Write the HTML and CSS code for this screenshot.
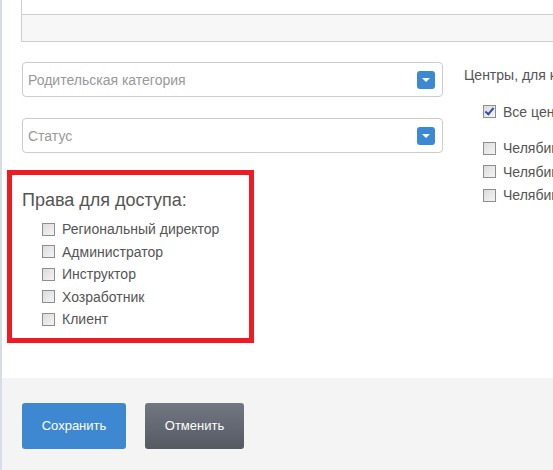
FILE: index.html
```html
<!DOCTYPE html>
<html lang="ru">
<head>
    <meta charset="UTF-8">
    <title>Категория</title>
    <link rel="stylesheet" href="styles.css">
</head>
<body>
    <div class="page">
        <div class="content">
            <div class="panel">
                <div class="panel-body"></div>
                <div class="panel-foot"></div>
            </div>

            <div class="form-row">
                <div class="col-left">
                    <div class="select">
                        <span class="select-text">Родительская категория</span>
                        <span class="select-btn"></span>
                    </div>
                    <div class="select">
                        <span class="select-text">Статус</span>
                        <span class="select-btn"></span>
                    </div>

                    <!-- выделено красной рамкой -->
                    <div class="access">
                        <div class="access-title">Права для доступа:</div>
                        <div class="access-list">
                            <div class="check-row"><span class="box"></span><span>Региональный директор</span></div>
                            <div class="check-row"><span class="box"></span><span>Администратор</span></div>
                            <div class="check-row"><span class="box"></span><span>Инструктор</span></div>
                            <div class="check-row"><span class="box"></span><span>Хозработник</span></div>
                            <div class="check-row"><span class="box"></span><span>Клиент</span></div>
                        </div>
                    </div>
                </div>
                <div class="col-right">
                    <div class="right-title">Центры, для которых доступна категория</div>
                    <div class="check-row all">
                        <span class="box checked"></span>
                        <span>Все центры</span>
                    </div>
                    <div class="centers">
                        <div class="check-row"><span class="box"></span><span>Челябинск, ул. Ленина</span></div>
                        <div class="check-row"><span class="box"></span><span>Челябинск, ул. Кирова</span></div>
                        <div class="check-row"><span class="box"></span><span>Челябинск, пр. Победы</span></div>
                    </div>
                </div>
            </div>
        </div>

        <div class="footer">
            <button class="btn btn-save">Сохранить</button>
            <button class="btn btn-cancel">Отменить</button>
        </div>
    </div>
</body>
</html>
```

FILE: styles.css
```css
html, body {
    margin: 0;
    height: 100%;
    overflow: hidden;
}
body {
    font-family: "Liberation Sans", Arial, sans-serif;
    font-size: 14px;
    color: #555;
    background: #fff;
}
.page {
    min-height: 100%;
    border-left: 2px solid #d8dce4;
    display: flex;
    flex-direction: column;
}
.content {
    padding-left: 19px;
}
.panel {
    border-left: 1px solid #cfcfcf;
    border-bottom: 1px solid #cfcfcf;
}
.panel-body {
    height: 14px;
    background: #fff;
    border-bottom: 1px solid #cfcfcf;
}
.panel-foot {
    height: 26px;
    background: #f7f7f7;
}
.form-row {
    display: flex;
    align-items: flex-start;
    margin-top: 20px;
}
.col-left {
    width: 421px;
    flex-shrink: 0;
    padding-left: 1px;
    display: flex;
    flex-direction: column;
    gap: 21px;
}
.select {
    height: 33px;
    border: 1px solid #ccc;
    border-radius: 4px;
    display: flex;
    align-items: center;
    padding: 0 7px 0 5px;
    color: #999;
    font-size: 14px;
}
.select-text {
    flex: 1;
}
.select-btn {
    width: 18px;
    height: 18px;
    border-radius: 3px;
    background: #3c88d2;
    position: relative;
}
.select-btn::after {
    content: "";
    position: absolute;
    left: 5px;
    top: 7px;
    border-left: 4px solid transparent;
    border-right: 4px solid transparent;
    border-top: 4px solid #fff;
}
.col-right {
    margin-left: 21px;
    white-space: nowrap;
    padding-top: 4px;
}
.right-title {
    line-height: 18px;
}
.check-row {
    display: flex;
    align-items: center;
    gap: 7px;
    height: 22.5px;
    white-space: nowrap;
}
.col-right .all {
    margin-top: 16px;
    padding-left: 19px;
}
.centers {
    margin-top: 13px;
    padding-left: 19px;
}
.col-right .check-row {
    height: 23.5px;
}
.box {
    width: 11px;
    height: 11px;
    border: 1px solid #8e8e8e;
    background: linear-gradient(135deg, #dcdcdc, #f4f4f4);
    flex-shrink: 0;
    position: relative;
}
.box.checked::after {
    content: "";
    position: absolute;
    left: 3px;
    top: 0;
    width: 3px;
    height: 7px;
    border-right: 2px solid #2f52a8;
    border-bottom: 2px solid #2f52a8;
    transform: rotate(40deg);
}
.access {
    box-sizing: border-box;
    margin: -4px 0 0 -15px;
    width: 247px;
    border: 5px solid #ed1c24;
    padding: 14px 0 7px 10px;
}
.access-title {
    font-size: 18px;
    line-height: 22px;
    margin-bottom: 7px;
}
.access-list {
    padding-left: 20px;
}
.footer {
    flex: 1;
    margin-top: 35px;
    background: #f4f4f4;
    padding: 25px 0 0 20px;
    display: flex;
    align-items: flex-start;
    gap: 19px;
}
.btn {
    height: 46px;
    border: none;
    border-radius: 3px;
    color: #fff;
    font-family: "Liberation Sans", Arial, sans-serif;
    font-size: 13px;
    cursor: pointer;
}
.btn-save {
    width: 104px;
    background: #3d88d0;
}
.btn-cancel {
    width: 99px;
    background: linear-gradient(#727782, #545962);
}
```
